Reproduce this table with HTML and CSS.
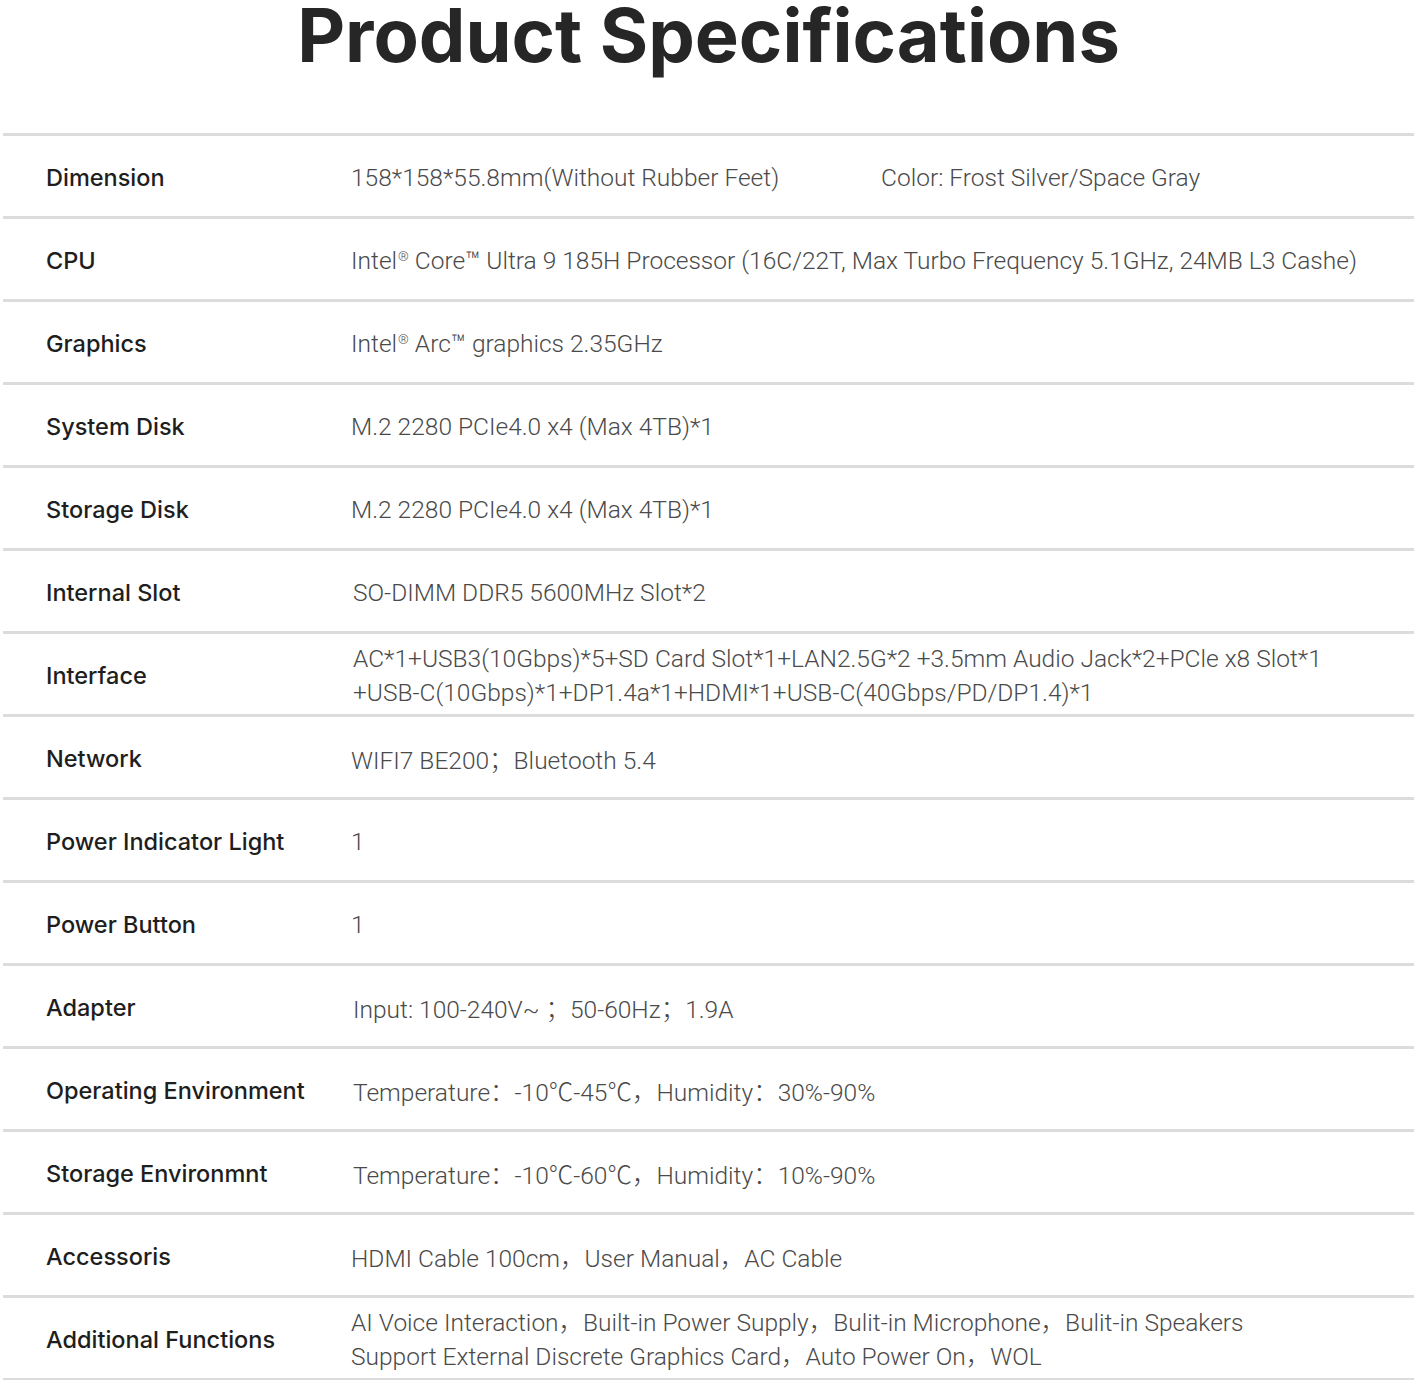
FILE: index.html
```html
<!DOCTYPE html>
<html lang="en">
<head>
<meta charset="utf-8">
<title>Product Specifications</title>
<link rel="stylesheet" href="styles.css">
</head>
<body>
<h1 class="title">Product Specifications</h1>
<div class="specs">
  <div class="row"><div class="label">Dimension</div><div class="value"><span class="dim">158*158*55.8mm(Without Rubber Feet)</span><span>Color: Frost Silver/Space Gray</span></div></div>
  <div class="row"><div class="label">CPU</div><div class="value">Intel<span class="reg">®</span> Core™ Ultra 9 185H Processor (16C/22T, Max Turbo Frequency 5.1GHz, 24MB L3 Cashe)</div></div>
  <div class="row"><div class="label">Graphics</div><div class="value">Intel<span class="reg">®</span> Arc™ graphics 2.35GHz</div></div>
  <div class="row"><div class="label">System Disk</div><div class="value">M.2 2280 PCIe4.0 x4 (Max 4TB)*1</div></div>
  <div class="row"><div class="label">Storage Disk</div><div class="value">M.2 2280 PCIe4.0 x4 (Max 4TB)*1</div></div>
  <div class="row"><div class="label">Internal Slot</div><div class="value shift">SO-DIMM DDR5 5600MHz Slot*2</div></div>
  <div class="row"><div class="label">Interface</div><div class="value multi shift">AC*1+USB3(10Gbps)*5+SD Card Slot*1+LAN2.5G*2 +3.5mm Audio Jack*2+PCle x8 Slot*1<br>+USB-C(10Gbps)*1+DP1.4a*1+HDMI*1+USB-C(40Gbps/PD/DP1.4)*1</div></div>
  <div class="row"><div class="label">Network</div><div class="value">WIFI7 BE200；Bluetooth 5.4</div></div>
  <div class="row"><div class="label">Power Indicator Light</div><div class="value">1</div></div>
  <div class="row"><div class="label">Power Button</div><div class="value">1</div></div>
  <div class="row"><div class="label">Adapter</div><div class="value shift">Input: 100-240V~ ；50-60Hz；1.9A</div></div>
  <div class="row"><div class="label">Operating Environment</div><div class="value shift">Temperature：-10℃-45℃，Humidity：30%-90%</div></div>
  <div class="row"><div class="label">Storage Environmnt</div><div class="value shift">Temperature：-10℃-60℃，Humidity：10%-90%</div></div>
  <div class="row"><div class="label">Accessoris</div><div class="value">HDMI Cable 100cm，User Manual，AC Cable</div></div>
  <div class="row"><div class="label">Additional Functions</div><div class="value multi">AI Voice Interaction，Built-in Power Supply，Bulit-in Microphone，Bulit-in Speakers<br>Support External Discrete Graphics Card，Auto Power On，WOL</div></div>
</div>
</body>
</html>
```
FILE: styles.css
```css
html, body {
  margin: 0;
  padding: 0;
  background: #ffffff;
}
body {
  width: 1417px;
  font-family: "Inter", "Noto Sans CJK SC", sans-serif;
}
.title {
  margin: 0;
  height: 133px;
  box-sizing: border-box;
  text-align: center;
  font-family: "Inter", sans-serif;
  font-weight: 700;
  font-size: 74px;
  line-height: 70px;
  color: #262626;
}
.specs {
  margin: 0 3px;
  border-bottom: 3px solid #dcdcdc;
}
.row {
  display: grid;
  grid-template-columns: 348px 1fr;
  align-items: center;
  height: 83px;
  box-sizing: border-box;
  padding-top: 3px;
  border-top: 3px solid #dcdcdc;
}
.label {
  padding-left: 43px;
  font-family: "Inter", sans-serif;
  font-weight: 500;
  font-size: 23.5px;
  color: #1e1e1e;
}
.value {
  font-family: "Roboto", "Noto Sans CJK SC", sans-serif;
  font-weight: 300;
  font-size: 24.5px;
  color: #4a4a4a;
  white-space: nowrap;
}
.value.shift {
  padding-left: 2px;
}
.value.multi {
  line-height: 34px;
}
.reg {
  font-size: 0.55em;
  vertical-align: 0.6em;
  margin-left: 1px;
}
.dim {
  display: inline-block;
  width: 530px;
}
```
